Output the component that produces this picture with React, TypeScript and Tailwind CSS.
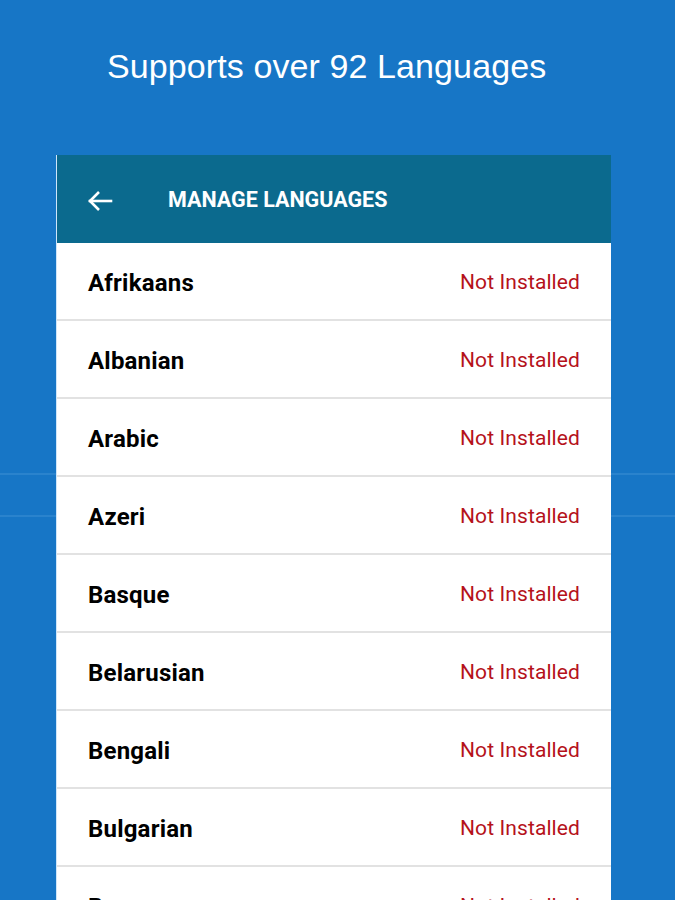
import React from "react";

const languages = [
  "Afrikaans",
  "Albanian",
  "Arabic",
  "Azeri",
  "Basque",
  "Belarusian",
  "Bengali",
  "Bulgarian",
  "Burmese",
];

const BackArrow = () => (
  <svg width="26" height="24" viewBox="0 0 26 24" fill="none" stroke="white" strokeWidth="2.6" strokeLinecap="square">
    <path d="M3 12h21" />
    <path d="M12 3l-9 9 9 9" strokeLinecap="butt" />
  </svg>
);

export default function App() {
  return (
    <div className="h-[900px] w-full overflow-hidden bg-[#1776c6] bg-[linear-gradient(to_bottom,transparent_473px,#2a83cd_473px,#2a83cd_475px,transparent_475px,transparent_515px,#2a83cd_515px,#2a83cd_517px,transparent_517px)]">
      {/* Title */}
      <div className="flex h-[155px] justify-start pl-[107px] pt-[44px]">
        <h1 className="font-['Liberation_Sans',Arial,sans-serif] text-[34px] leading-[44px] tracking-[0.1px] text-white">
          Supports over 92 Languages
        </h1>
      </div>

      {/* Card */}
      <div className="mx-[56px] w-[555px] border-l border-[#cfe6fa] bg-white font-['Roboto',sans-serif]">
        <div className="flex h-[88px] items-center bg-[#0b6a8e] pt-[3px]">
          <div className="ml-[30px] flex w-[81px] items-center">
            <BackArrow />
          </div>
          <span className="text-[21.5px] font-bold text-white">MANAGE LANGUAGES</span>
        </div>

        <ul>
          {languages.map((lang) => (
            <li
              key={lang}
              className="flex h-[78px] items-center justify-between border-b-2 border-[#e2e2e2] pl-[31px] pr-[31px] pt-[3px]"
            >
              <span className="text-[24px] font-bold tracking-[0.2px] text-black">{lang}</span>
              <span className="text-[21px] tracking-[0.1px] text-[#b5121b]">Not Installed</span>
            </li>
          ))}
        </ul>
      </div>
    </div>
  );
}
